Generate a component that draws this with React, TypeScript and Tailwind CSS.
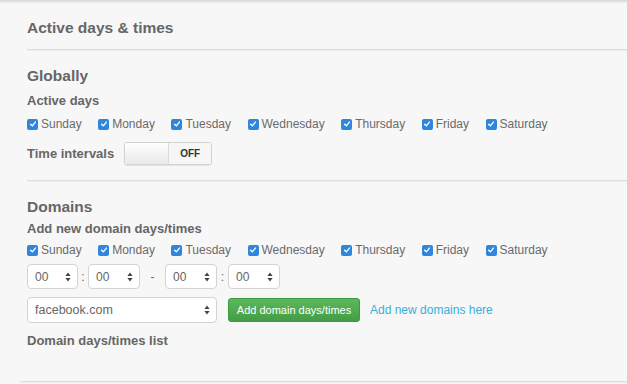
import React from 'react';

const days = ['Sunday', 'Monday', 'Tuesday', 'Wednesday', 'Thursday', 'Friday', 'Saturday'];

const Check = ({ label }: { label: string }) => (
    <label className="flex items-center gap-[3px]">
        <span className="flex h-[11px] w-[11px] items-center justify-center rounded-[2px] bg-[#2f86dc]">
            <svg viewBox="0 0 10 10" className="h-[8px] w-[8px]">
                <path d="M2 5.2 L4.2 7.3 L8 2.6" fill="none" stroke="#fff" strokeWidth="1.7" strokeLinecap="round" strokeLinejoin="round" />
            </svg>
        </span>
        <span>{label}</span>
    </label>
);

const Arrows = () => (
    <svg viewBox="0 0 6 10" className="h-[10px] w-[6px]">
        <path d="M3 0.5 L5.6 4 L0.4 4 Z" fill="#444" />
        <path d="M3 9.5 L5.6 6 L0.4 6 Z" fill="#444" />
    </svg>
);

const Select = ({ value, width }: { value: string; width: string }) => (
    <div className={`flex h-full items-center justify-between rounded-[4px] border border-[#d4d4d4] bg-white pl-[7px] pr-[6px] ${width}`}>
        <span>{value}</span>
        <Arrows />
    </div>
);

const Rule = () => <div className="h-[2px] border-t border-[#dedede] bg-[#eeeeee]" />;

const DayRow = () => (
    <div className="flex h-[16px] items-center gap-x-[16.5px] text-[12px] text-[#6a6a6a]">
        {days.map((d) => (
            <Check key={d} label={d} />
        ))}
    </div>
);

export default function App() {
    return (
        <div className="h-[384px] w-[627px] overflow-hidden bg-[#f7f7f7] font-['Liberation_Sans',Arial,sans-serif] text-[#666]">
            <div className="h-[3px] bg-gradient-to-b from-[#d6d6d6] to-[#f1f1f1]" />
            <div className="pl-[27px]">
                <h1 className="mt-[15px] flex h-[20px] items-center text-[15.5px] font-bold">Active days &amp; times</h1>
                <div className="mt-[11px]">
                    <Rule />
                </div>

                <h2 className="mt-[15px] flex h-[20px] items-center text-[15.5px] font-bold">Globally</h2>
                <div className="mt-[6px] flex h-[18px] items-center text-[13px] font-bold">Active days</div>
                <div className="mt-[6px]">
                    <DayRow />
                </div>
                <div className="mt-[10px] flex h-[23px] items-center gap-[10px]">
                    <span className="text-[13px] font-bold">Time intervals</span>
                    <div className="flex h-[23px] w-[88px] overflow-hidden rounded-[3px] border border-[#d2d2d2] shadow-[0_1px_1px_rgba(0,0,0,0.08)]">
                        <div className="w-[44px] border-r border-[#dcdcdc] bg-gradient-to-b from-[#ffffff] to-[#e9e9e9]" />
                        <div className="flex flex-1 items-center justify-center bg-[#f6f6f6] text-[10px] font-bold text-[#333]">OFF</div>
                    </div>
                </div>
                <div className="mt-[15px]">
                    <Rule />
                </div>

                <h2 className="mt-[15px] flex h-[20px] items-center text-[15.5px] font-bold">Domains</h2>
                <div className="mt-[3px] flex h-[18px] items-center text-[13px] font-bold">Add new domain days/times</div>
                <div className="mt-[4px]">
                    <DayRow />
                </div>
                <div className="mt-[6px] flex h-[25px] items-center text-[12px] text-[#666]">
                    <Select value="00" width="w-[51px]" />
                    <span className="w-[10px] text-center">:</span>
                    <Select value="00" width="w-[52px]" />
                    <span className="w-[25px] text-center">-</span>
                    <Select value="00" width="w-[52px]" />
                    <span className="w-[11px] text-center">:</span>
                    <Select value="00" width="w-[52px]" />
                </div>
                <div className="mt-[8px] flex h-[26px] items-center text-[12.5px]">
                    <Select value="facebook.com" width="w-[190px]" />
                    <button className="ml-[11px] h-[24px] w-[132px] rounded-[3px] border border-[#3e9a3e] bg-gradient-to-b from-[#5cb85c] to-[#449d44] text-[11px] text-white">
                        Add domain days/times
                    </button>
                    <a className="ml-[10px] text-[12px] text-[#36b0d8]">Add new domains here</a>
                </div>
                <div className="mt-[9px] flex h-[18px] items-center text-[13px] font-bold">Domain days/times list</div>
            </div>
            <div className="mt-[31px] pl-[20px]">
                <Rule />
            </div>
        </div>
    );
}
